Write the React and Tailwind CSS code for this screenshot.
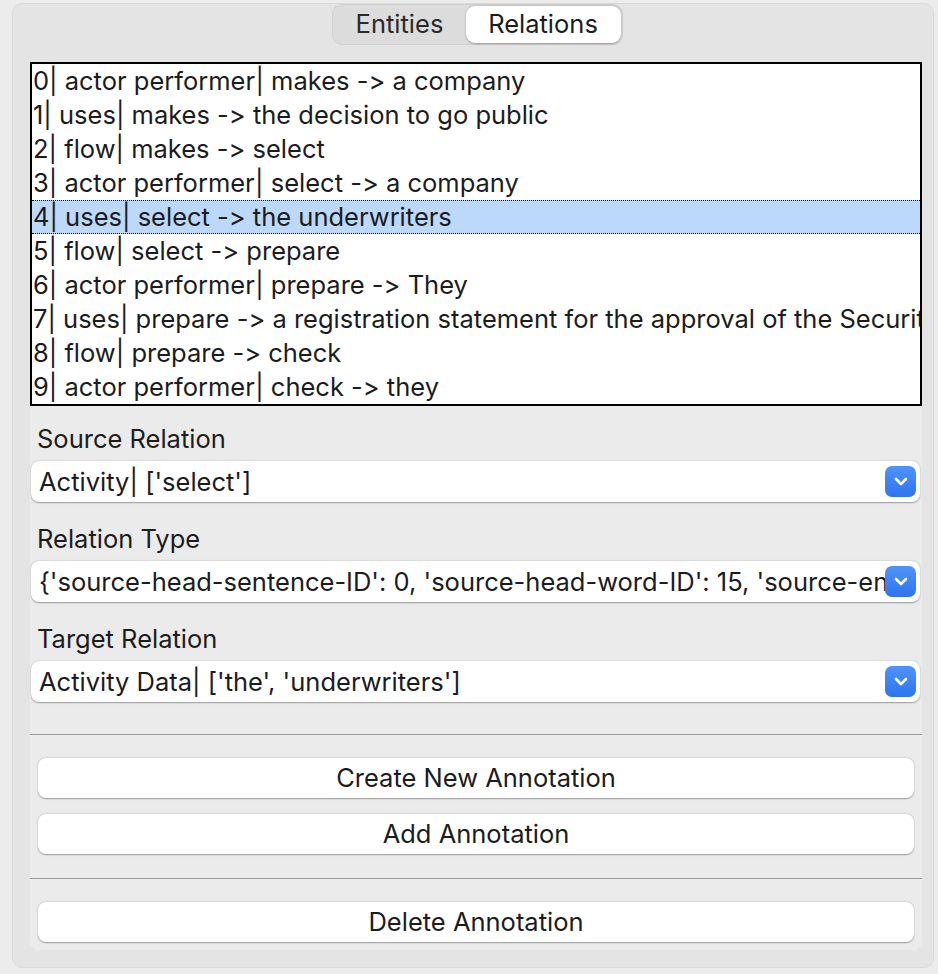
import React from "react";

const ROWS = [
  "0| actor performer| makes -> a company",
  "1| uses| makes -> the decision to go public",
  "2| flow| makes -> select",
  "3| actor performer| select -> a company",
  "4| uses| select -> the underwriters",
  "5| flow| select -> prepare",
  "6| actor performer| prepare -> They",
  "7| uses| prepare -> a registration statement for the approval of the Securities and Exchange Commission",
  "8| flow| prepare -> check",
  "9| actor performer| check -> they",
];

const SELECTED = 4;

function Chevron() {
  return (
    <svg width="14" height="9" viewBox="0 0 14 9" fill="none">
      <path d="M2 2l5 5 5-5" stroke="white" strokeWidth="2.6" strokeLinecap="round" strokeLinejoin="round" />
    </svg>
  );
}

function Combo({ value }) {
  return (
    <div className="mt-[5px] h-[41px] ml-[1px] mr-[2px] rounded-[8px] bg-white shadow-[0_0.5px_1.5px_rgba(0,0,0,0.35)] flex items-center pl-[8px] pr-[4px]">
      <div className="flex-1 overflow-hidden whitespace-nowrap leading-[34px]">{value}</div>
      <div className="w-[31px] h-[31px] rounded-[7px] bg-gradient-to-b from-[#4f93f9] to-[#2d74ef] flex items-center justify-center shrink-0">
        <Chevron />
      </div>
    </div>
  );
}

function Button({ children }) {
  return (
    <button className="h-[40px] mx-[8px] w-[calc(100%-16px)] rounded-[8px] bg-white shadow-[0_0.5px_1.5px_rgba(0,0,0,0.35)] text-center leading-[40px]">
      {children}
    </button>
  );
}

export default function App() {
  return (
    <div
      className="w-[938px] h-[974px] bg-[#ececec] pt-[3px] pl-[12px] pr-[4px] pb-[6px] text-[#1c1c1c] text-[25.5px] [font-feature-settings:'calt'_0,'liga'_0]"
      style={{ fontFamily: "Inter, 'Liberation Sans', sans-serif" }}
    >
      <div className="h-full rounded-[10px] bg-[#e4e4e4] border border-[#dadada] pl-[17px] pr-[11px] pb-[17px] flex flex-col">
        {/* tabs */}
        <div className="flex justify-center pl-[2px]">
          <div className="flex h-[41px] rounded-[10px] bg-[#dcdcdc] border border-[#d0d0d0] p-[1px]">
            <div className="w-[132px] flex items-center justify-center text-[#2a2a2a]">Entities</div>
            <div className="w-[155px] flex items-center justify-center bg-white rounded-[9px] shadow-[0_0.5px_2px_rgba(0,0,0,0.3)]">
              Relations
            </div>
          </div>
        </div>

        {/* content */}
        <div className="mt-[17px] flex-1 bg-[#ebebeb] rounded-b-[8px] flex flex-col">
          <div className="h-[344px] bg-white border-2 border-black overflow-hidden">
            {ROWS.map((r, i) => (
              <div
                key={i}
                className={
                  i === SELECTED
                    ? "h-[34px] leading-[32px] pl-[1px] whitespace-nowrap bg-[#bcd8fb] border-y border-dotted border-black"
                    : "h-[34px] leading-[34px] pl-[1px] whitespace-nowrap"
                }
              >
                {r}
              </div>
            ))}
          </div>

          <div className="mt-[16px] pl-[7px] leading-[34px]">Source Relation</div>
          <Combo value="Activity| ['select']" />

          <div className="mt-[20px] pl-[7px] leading-[34px]">Relation Type</div>
          <Combo value="{'source-head-sentence-ID': 0, 'source-head-word-ID': 15, 'source-entity': 'select', 'target-head-sentence-ID': 0}" />

          <div className="mt-[20px] pl-[7px] leading-[34px]">Target Relation</div>
          <Combo value="Activity Data| ['the', 'underwriters']" />

          <div className="mt-[32px] h-px bg-[#9c9c9c]" />
          <div className="mt-[23px] flex flex-col gap-[16px]">
            <Button>Create New Annotation</Button>
            <Button>Add Annotation</Button>
          </div>
          <div className="mt-[24px] h-px bg-[#9c9c9c]" />
          <div className="mt-[23px]">
            <Button>Delete Annotation</Button>
          </div>
        </div>
      </div>
    </div>
  );
}
